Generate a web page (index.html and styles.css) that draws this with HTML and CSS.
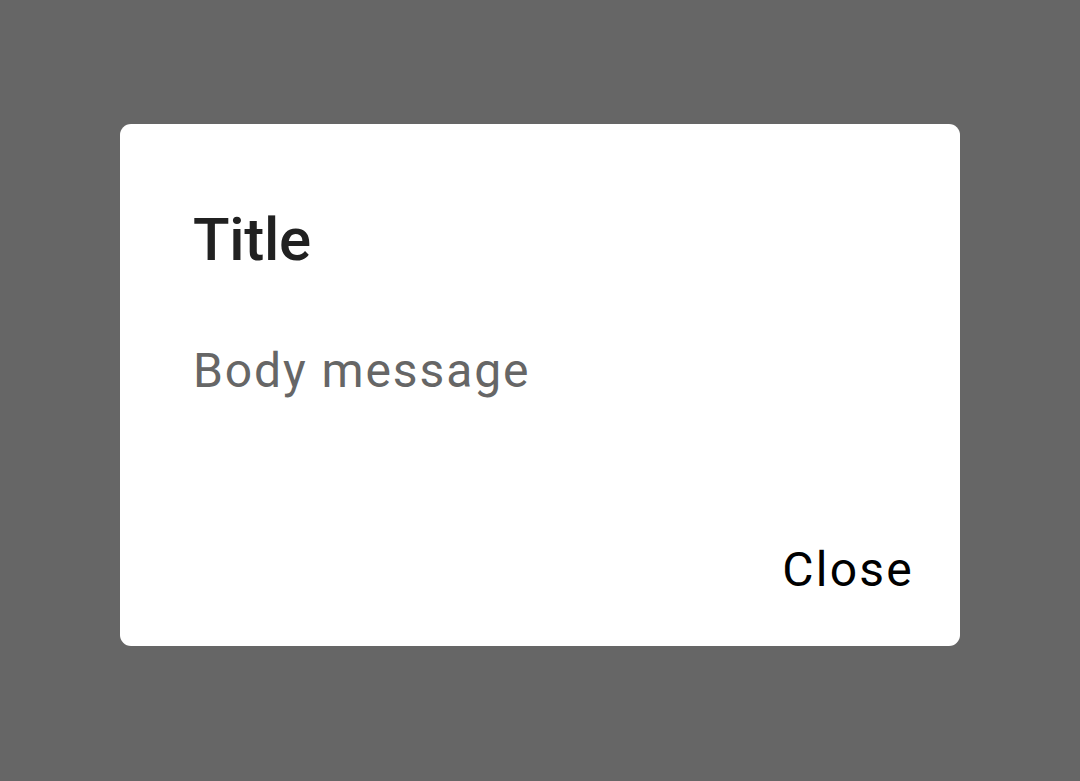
FILE: index.html
```html
<!DOCTYPE html>
<html>
<head>
<meta charset="utf-8">
<link rel="stylesheet" href="styles.css">
</head>
<body>
<div class="screen">
  <div class="dialog">
    <h1 class="title">Title</h1>
    <p class="body">Body message</p>
    <div class="actions">
      <button class="btn">Close</button>
    </div>
  </div>
</div>
</body>
</html>
```
FILE: styles.css
```css
html, body {
  margin: 0;
  padding: 0;
}
body {
  background: #666666;
  font-family: Roboto, "Liberation Sans", sans-serif;
}
.screen {
  width: 1080px;
  height: 781px;
  display: flex;
  flex-direction: column;
  align-items: flex-start;
  padding: 124px 120px 0;
  box-sizing: border-box;
}
.dialog {
  width: 840px;
  height: 522px;
  box-sizing: border-box;
  background: #ffffff;
  border-radius: 11px;
  padding: 86px 46px 0 73px;
  display: flex;
  flex-direction: column;
}
.title {
  margin: 0;
  font-size: 60px;
  line-height: 60px;
  font-weight: 500;
  color: #212121;
  letter-spacing: -0.3px;
}
.body {
  margin: 77px 0 0;
  font-size: 48px;
  line-height: 48px;
  font-weight: 400;
  color: #666666;
  letter-spacing: 1.9px;
}
.actions {
  margin-top: 151px;
  display: flex;
  justify-content: flex-end;
}
.btn {
  border: 0;
  background: none;
  padding: 0;
  margin: 0;
  font-family: Roboto, "Liberation Sans", sans-serif;
  font-size: 48px;
  line-height: 48px;
  font-weight: 400;
  color: #000000;
  letter-spacing: 2.25px;
}
```
